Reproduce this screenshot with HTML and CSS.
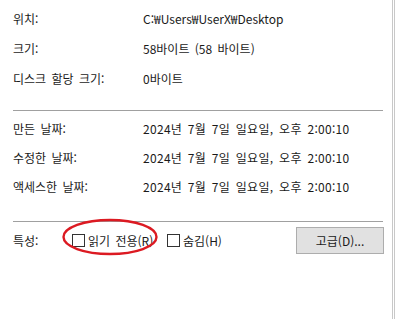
FILE: index.html
```html
<!DOCTYPE html>
<html lang="ko">
<head>
  <meta charset="UTF-8">
  <title>속성</title>
  <link rel="stylesheet" href="styles.css">
</head>
<body>
  <div class="panel">
    <div class="group">
      <div class="row"><span class="label">위치:</span><span class="value">C:₩Users₩UserX₩Desktop</span></div>
      <div class="row"><span class="label">크기:</span><span class="value">58바이트 (58 바이트)</span></div>
      <div class="row"><span class="label">디스크 할당 크기:</span><span class="value">0바이트</span></div>
    </div>
    <hr class="sep sep-top">
    <div class="group dates">
      <div class="row"><span class="label">만든 날짜:</span><span class="value">2024년 7월 7일 일요일, 오후 2:00:10</span></div>
      <div class="row"><span class="label">수정한 날짜:</span><span class="value">2024년 7월 7일 일요일, 오후 2:00:10</span></div>
      <div class="row"><span class="label">액세스한 날짜:</span><span class="value">2024년 7월 7일 일요일, 오후 2:00:10</span></div>
    </div>
    <hr class="sep sep-bottom">
    <div class="attrs">
      <span class="attr-label">특성:</span>
      <label class="check readonly"><span class="box"></span>읽기 전용(R)
        <svg class="mark" width="100" height="40" viewBox="0 0 100 40">
          <ellipse cx="50" cy="20" rx="46.5" ry="17" fill="none" stroke="#dc1a22" stroke-width="2.4"/>
        </svg>
      </label>
      <label class="check"><span class="box"></span>숨김(H)</label>
      <button class="advanced">고급(D)...</button>
    </div>
  </div>
</body>
</html>
```

FILE: styles.css
```css
body {
  margin: 0;
  background-color: #ffffff;
  font-family: "Noto Sans CJK KR", "Noto Sans", sans-serif;
  font-size: 12px;
  word-spacing: 2px;
  color: #1a1a1a;
}
.panel {
  width: 395px;
  height: 319px;
  box-sizing: border-box;
  padding: 3px 0 0 13px;
  border-right: 3px double #c8c8c8;
}
.row {
  display: flex;
  height: 30px;
  align-items: center;
}
.dates .row {
  height: 29px;
}
.dates .value {
  letter-spacing: 0.3px;
}
.label {
  width: 130px;
}
.sep {
  margin: 0 9px 0 0;
  border: none;
  border-top: 1px solid #a0a0a0;
  height: 0;
}
.sep-top {
  margin-top: 17px;
  margin-bottom: 3px;
}
.sep-bottom {
  margin-top: 20px;
}
.attrs {
  display: flex;
  align-items: center;
  margin-top: 4px;
  height: 28px;
}
.attr-label {
  width: 59px;
}
.check {
  display: flex;
  align-items: center;
  position: relative;
}
.box {
  width: 11px;
  height: 11px;
  border: 1px solid #333;
  margin-right: 3px;
}
.readonly {
  width: 95px;
}
.mark {
  position: absolute;
  left: -12px;
  top: -15px;
}
.advanced {
  margin-left: auto;
  margin-right: 8px;
  width: 88px;
  height: 27px;
  background-color: #e1e1e1;
  border: 1px solid #adadad;
  font-family: inherit;
  font-size: 12px;
  color: #1a1a1a;
  padding: 0;
}
```
